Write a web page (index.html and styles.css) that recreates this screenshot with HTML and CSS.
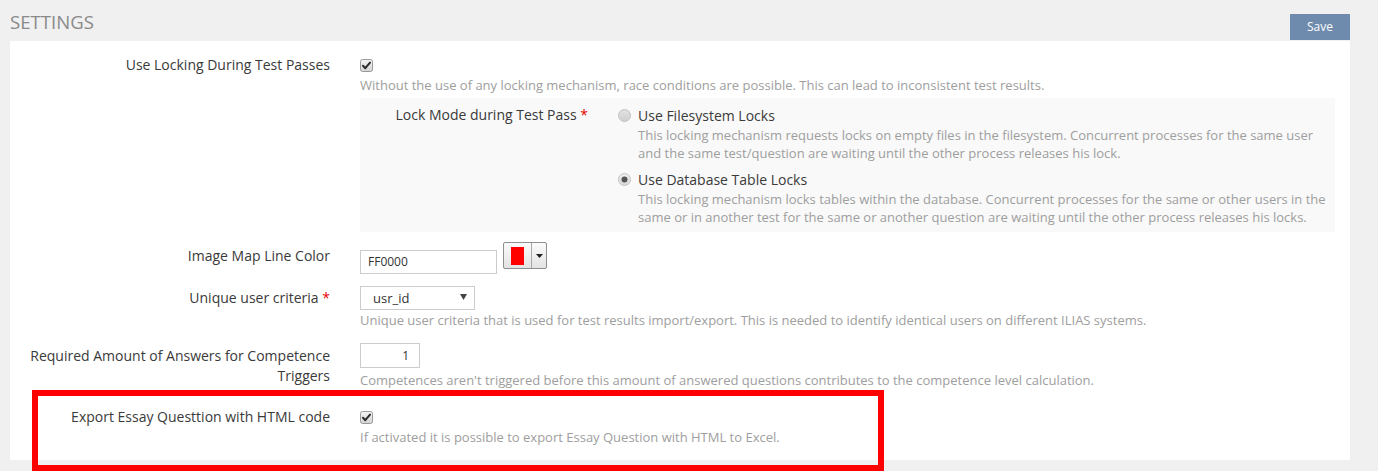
FILE: index.html
```html
<!DOCTYPE html>
<html>
<head>
<meta charset="utf-8">
<link rel="stylesheet" href="styles.css">
</head>
<body>
<div class="header">
  <h1 class="title">SETTINGS</h1>
  <button class="save">Save</button>
</div>
<div class="panel">
  <div class="row row-first">
    <div class="label">Use Locking During Test Passes</div>
    <div class="control">
      <div class="check-line">
        <svg class="checkbox" width="13" height="13" viewBox="0 0 13 13"><defs><linearGradient id="cg1" x1="0" y1="0" x2="0" y2="1"><stop offset="0" stop-color="#f4f4f4"/><stop offset="1" stop-color="#d4d4d4"/></linearGradient></defs><rect x="0.5" y="0.5" width="12" height="12" rx="2" fill="url(#cg1)" stroke="#9a9a9a"/><path d="M3 6.8 L5.3 9.2 L10 3.6" fill="none" stroke="#2b2b2b" stroke-width="2" stroke-linecap="round" stroke-linejoin="round"/></svg>
      </div>
      <div class="help">Without the use of any locking mechanism, race conditions are possible. This can lead to inconsistent test results.</div>
      <div class="subpanel">
        <div class="sub-label">Lock Mode during Test Pass <span class="req">*</span></div>
        <div class="sub-control">
          <div class="radio-line">
            <svg class="radio" width="13" height="13" viewBox="0 0 13 13"><defs><linearGradient id="rg1" x1="0" y1="0" x2="0" y2="1"><stop offset="0" stop-color="#e2e2e2"/><stop offset="1" stop-color="#cfcfcf"/></linearGradient></defs><circle cx="6.5" cy="6.5" r="6" fill="url(#rg1)" stroke="#c2c2c2"/></svg>
            <span>Use Filesystem Locks</span>
          </div>
          <div class="desc">This locking mechanism requests locks on empty files in the filesystem. Concurrent processes for the same user and the same test/question are waiting until the other process releases his lock.</div>
          <div class="radio-line radio-second">
            <svg class="radio" width="13" height="13" viewBox="0 0 13 13"><defs><linearGradient id="rg2" x1="0" y1="0" x2="0" y2="1"><stop offset="0" stop-color="#f0f0f0"/><stop offset="1" stop-color="#d8d8d8"/></linearGradient></defs><circle cx="6.5" cy="6.5" r="6" fill="url(#rg2)" stroke="#c2c2c2"/><circle cx="6.5" cy="6.5" r="3" fill="#555"/></svg>
            <span>Use Database Table Locks</span>
          </div>
          <div class="desc">This locking mechanism locks tables within the database. Concurrent processes for the same or other users in the same or in another test for the same or another question are waiting until the other process releases his locks.</div>
        </div>
      </div>
    </div>
  </div>

  <div class="row row-std">
    <div class="label">Image Map Line Color</div>
    <div class="control color-control">
      <div class="text-input color-input">FF0000</div>
      <div class="color-btn">
        <span class="swatch-wrap"><span class="swatch"></span></span>
        <span class="caret-wrap"><svg width="7" height="4" viewBox="0 0 7 4"><path d="M0 0 H7 L3.5 4 Z" fill="#222"/></svg></span>
      </div>
    </div>
  </div>

  <div class="row row-std">
    <div class="label">Unique user criteria <span class="req">*</span></div>
    <div class="control">
      <div class="select"><span>usr_id</span><svg width="7" height="6" viewBox="0 0 7 6"><path d="M0 0 H7 L3.5 6 Z" fill="#444"/></svg></div>
      <div class="help">Unique user criteria that is used for test results import/export. This is needed to identify identical users on different ILIAS systems.</div>
    </div>
  </div>

  <div class="row row-std">
    <div class="label label-two">Required Amount of Answers for Competence Triggers</div>
    <div class="control">
      <div class="text-input number-input">1</div>
      <div class="help help-after-number">Competences aren't triggered before this amount of answered questions contributes to the competence level calculation.</div>
    </div>
  </div>

  <div class="row row-last">
    <div class="label">Export Essay Questtion with HTML code</div>
    <div class="control">
      <div class="check-line">
        <svg class="checkbox" width="13" height="13" viewBox="0 0 13 13"><defs><linearGradient id="cg2" x1="0" y1="0" x2="0" y2="1"><stop offset="0" stop-color="#f4f4f4"/><stop offset="1" stop-color="#d4d4d4"/></linearGradient></defs><rect x="0.5" y="0.5" width="12" height="12" rx="2" fill="url(#cg2)" stroke="#9a9a9a"/><path d="M3 6.8 L5.3 9.2 L10 3.6" fill="none" stroke="#2b2b2b" stroke-width="2" stroke-linecap="round" stroke-linejoin="round"/></svg>
      </div>
      <div class="help">If activated it is possible to export Essay Question with HTML to Excel.</div>
    </div>
  </div>
</div>
<div class="highlight"></div>
</body>
</html>
```

FILE: styles.css
```css
* { box-sizing: border-box; }

html, body {
  margin: 0;
  padding: 0;
  background: #f0f0f0;
  font-family: "Open Sans", "Liberation Sans", sans-serif;
  color: #3a3a3a;
  overflow: hidden;
}

body {
  position: relative;
  width: 1378px;
  height: 471px;
}

.header {
  display: flex;
  justify-content: space-between;
  align-items: flex-start;
  width: 1340px;
  height: 41px;
  margin-left: 10px;
  padding-top: 10px;
}

.title {
  margin: 0;
  font-size: 18.6px;
  line-height: 24px;
  font-weight: 400;
  color: #8a8a8a;
}

.save {
  margin-top: 4px;
  width: 60px;
  height: 26px;
  border: 0;
  padding: 0;
  background: #6e8aad;
  color: #fff;
  font-family: "Open Sans", "Liberation Sans", sans-serif;
  font-size: 12px;
  line-height: 26px;
}

.panel {
  margin-left: 10px;
  width: 1340px;
  height: 419px;
  background: #fff;
  display: flex;
  flex-direction: column;
}

.row {
  display: grid;
  grid-template-columns: 310px 975px;
  column-gap: 30px;
  padding-left: 10px;
}

.row-first { padding-top: 14px; }
.row-std { padding-top: 14px; }
.row-last { padding-top: 18px; }

.label {
  text-align: right;
  font-size: 14px;
  line-height: 20px;
  color: #3a3a3a;
}

.label-two { padding-top: 3px; }

.req { color: #e60000; }

.control {
  display: flex;
  flex-direction: column;
  align-items: flex-start;
}

.check-line {
  height: 20px;
  display: flex;
  align-items: center;
}

.checkbox, .radio { display: block; flex: none; }

.help {
  margin-top: 1px;
  font-size: 13px;
  line-height: 18px;
  color: #9e9e9e;
  white-space: nowrap;
}

.help-after-number { margin-top: 3px; }

.subpanel {
  margin-top: 4px;
  width: 975px;
  background: #f9f9f9;
  display: grid;
  grid-template-columns: 228px 1fr;
  column-gap: 30px;
  padding: 7px 0 6px 0;
}

.sub-label {
  text-align: right;
  font-size: 14px;
  line-height: 20px;
  color: #3a3a3a;
}

.radio-line {
  display: flex;
  align-items: center;
  gap: 7px;
  height: 20px;
  font-size: 14px;
  color: #3a3a3a;
}

.radio-second { margin-top: 7px; }

.desc {
  margin-top: 1px;
  padding-left: 20px;
  width: 712px;
  font-size: 13px;
  line-height: 18px;
  color: #9e9e9e;
}

.color-control {
  flex-direction: row;
}

.text-input {
  border: 1px solid #cccccc;
  background: #fff;
  font-size: 12px;
  color: #333;
}

.color-input {
  margin-top: 4px;
  width: 137px;
  height: 24px;
  line-height: 22px;
  padding-left: 7px;
}

.color-btn {
  margin-top: -4px;
  margin-left: 6px;
  width: 44px;
  height: 27px;
  border: 1px solid #8f8f8f;
  border-radius: 2px;
  background: linear-gradient(#fbfbfb, #e3e3e3);
  display: flex;
}

.swatch-wrap {
  width: 28px;
  display: flex;
  align-items: center;
  justify-content: center;
  border-right: 1px solid #a8a8a8;
}

.swatch {
  display: block;
  width: 13px;
  height: 18px;
  background: #ff0000;
}

.caret-wrap {
  flex: 1;
  display: flex;
  align-items: center;
  justify-content: center;
}

.caret-wrap svg { display: block; }

.select {
  margin-top: -2px;
  width: 115px;
  height: 24px;
  border: 1px solid #cccccc;
  background: #fff;
  display: flex;
  align-items: center;
  justify-content: space-between;
  padding: 0 7px 0 12px;
  font-size: 13px;
  color: #333;
}

.select svg { display: block; margin-top: -3px; }

.number-input {
  width: 60px;
  height: 25px;
  line-height: 23px;
  text-align: right;
  padding-right: 10px;
}

.highlight {
  position: absolute;
  left: 32px;
  top: 390px;
  width: 852px;
  height: 81px;
  border: 6px solid #ff0000;
}
```
